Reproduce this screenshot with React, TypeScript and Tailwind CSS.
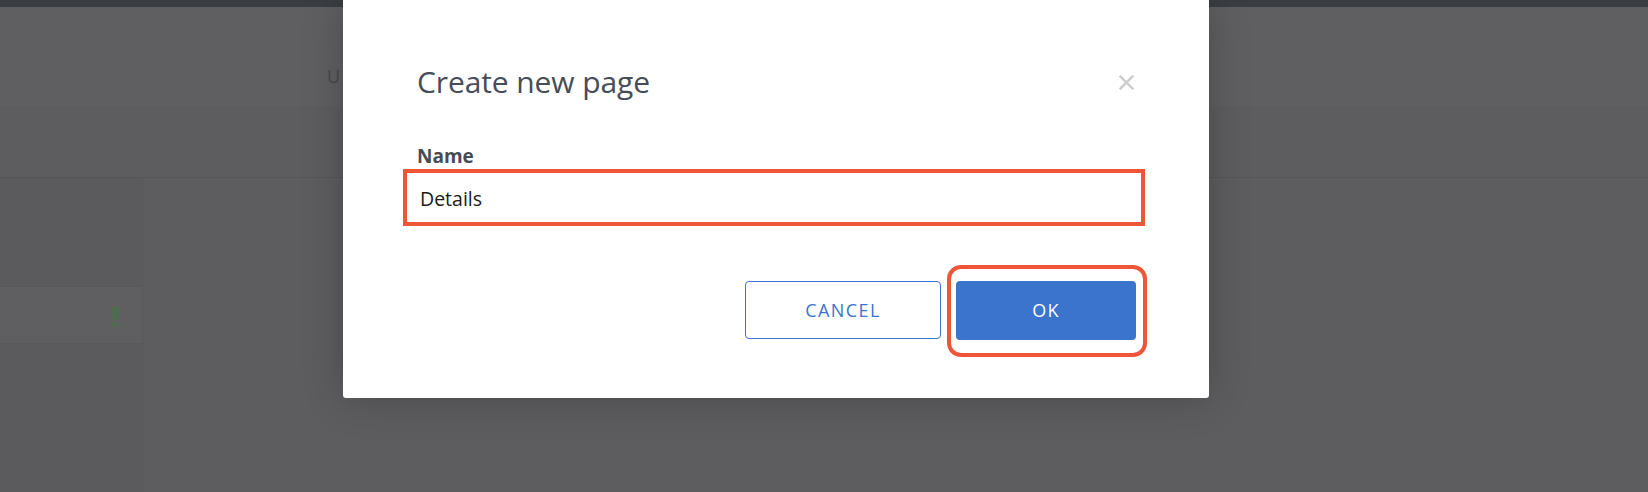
import React from "react";

function CloseIcon() {
  return (
    <svg width="15" height="15" viewBox="0 0 15 15" className="block">
      <path d="M1.5 1.5 L13.5 13.5 M13.5 1.5 L1.5 13.5" stroke="#cbcbcb" strokeWidth="2.4" strokeLinecap="square" />
    </svg>
  );
}

export default function App() {
  return (
    <div
      className="relative w-[1648px] h-[492px] overflow-hidden bg-[#5c5c5e]"
      style={{ fontFamily: '"Open Sans", "Liberation Sans", sans-serif' }}
    >
      {/* dimmed background page */}
      <div className="flex flex-col w-full h-full">
        <div className="h-[7px] bg-[#3a3d42]" />
        <div className="h-[99px] bg-[#5f5f61] flex items-start">
          <span className="ml-[327px] mt-[57px] text-[18px] leading-[24px] text-[#48484a]">U</span>
        </div>
        <div className="h-[72px] bg-[#5d5d5f] border-b border-[#565658]" />
        <div className="flex flex-1">
          <div className="w-[143px] border-r border-[#58585a] bg-[#5b5b5d] pt-[108px]">
            <div className="h-[58px] bg-[#5f5f61] border-y border-[#59595b] flex items-center justify-end pr-[23px]">
              <span className="text-[29px] font-extrabold leading-none text-[#4f6c4f] scale-x-125">!</span>
            </div>
          </div>
          <div className="flex-1 bg-[#5d5d5f]" />
        </div>
      </div>

      {/* modal */}
      <div className="absolute left-[343px] top-0 w-[866px] h-[398px] bg-white rounded-b-[3px] shadow-[0_0_40px_rgba(0,0,0,0.22)] flex flex-col">
        <div className="flex items-start justify-between pl-[74px] pr-[75px] pt-[64px]">
          <h2 className="text-[30px] leading-[36px] font-normal text-[#464c58] tracking-[-0.1px]">Create new page</h2>
          <div className="mt-[11px]">
            <CloseIcon />
          </div>
        </div>
        <label className="block mt-[44px] pl-[74px] text-[19px] leading-[24px] font-bold text-[#454b57]">Name</label>
        <div className="mt-[1px] ml-[60px] w-[742px] h-[57px] border-4 border-[#ef5538] flex items-center pl-[13px] pt-[2px]">
          <span className="text-[19.5px] leading-[24px] text-[#1b1b1b]">Details</span>
        </div>
        <div className="flex items-start mt-[55px] ml-[402px] gap-[15px]">
          <button className="w-[196px] h-[58px] rounded-[4px] border border-[#3b74cc] bg-white text-[#3b74cc] text-[18px] tracking-[1.4px] flex items-center justify-center">
            CANCEL
          </button>
          <div className="relative">
            <button className="w-[180px] h-[59px] rounded-[4px] bg-[#3b74cc] text-white text-[18px] tracking-[1.3px] flex items-center justify-center">
              OK
            </button>
            <div className="absolute left-[-9px] top-[-16px] w-[200px] h-[92px] border-4 border-[#ef5538] rounded-[14px]" />
          </div>
        </div>
      </div>
    </div>
  );
}
